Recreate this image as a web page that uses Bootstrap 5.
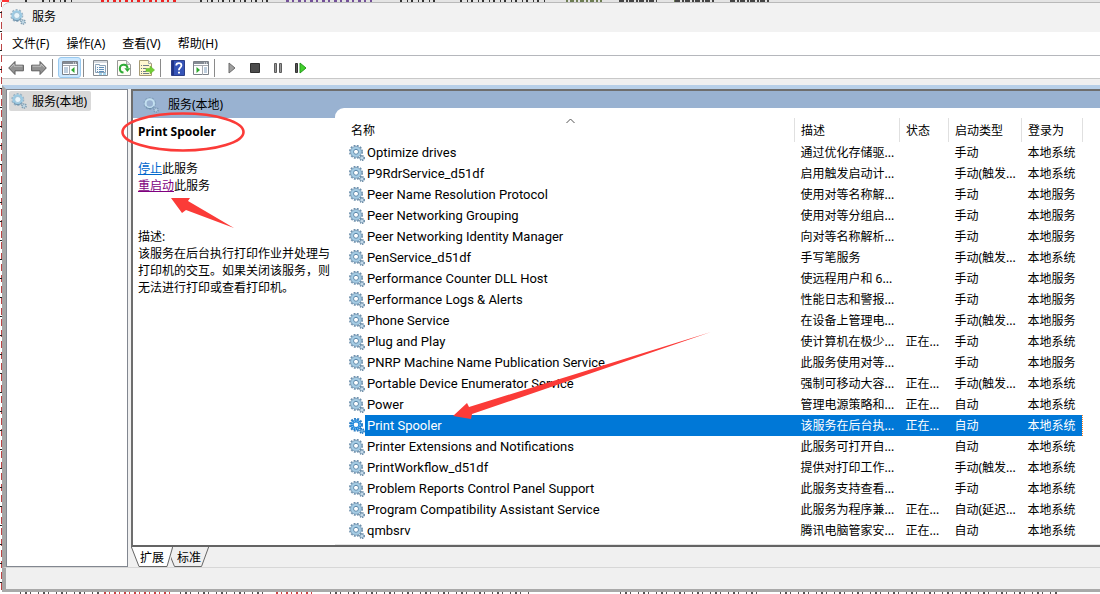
<!DOCTYPE html>
<html lang="zh-CN">
<head>
<meta charset="utf-8">
<meta name="viewport" content="width=device-width, initial-scale=1">
<title>服务</title>
<link href="https://cdn.jsdelivr.net/npm/bootstrap@5.3.0/dist/css/bootstrap.min.css" rel="stylesheet">
<style>
body{font-family:"Noto Sans","Noto Sans CJK SC",sans-serif;font-size:12px;line-height:17px;color:#000;background:#fff;overflow:hidden}
button{font:inherit;color:inherit;background:none;border:0;padding:0}
svg{display:block;flex:none}
.desktop{height:100vh;padding:2px 0 2px 2px}
.edge-left{left:0;top:0;bottom:0;width:2px;background:linear-gradient(90deg,#fff 1px,transparent 1px),repeating-linear-gradient(#b44 0 7px,#fff 7px 11px)}
.edge-left::before{content:"";position:absolute;inset:12px 0 0;background:repeating-linear-gradient(#222 0 1px,transparent 1px 19px)}
.window{background:#f0f0f0;border-top:1px solid #b9b9b9;border-top-left-radius:8px;min-height:0}
.titlebar{flex:none;height:29px;padding:0 0 2px 8px;gap:6px;background:#f2f2f2;border-top-left-radius:8px}
.menubar{flex:none;height:23px;padding-left:10px;gap:17px;background:#fff}
.toolbar{flex:none;height:24px;padding:1px 0 0 2px;background:#fff;border-top:1px solid #b5b7bc;border-bottom:1px solid #c8c8c8}
.tool{width:23px;height:21px;display:flex;align-items:center;justify-content:center;border-radius:3px}
.tool.active{background:#cce8ff;border:1px solid #99c9ef}
.sep{width:1px;height:18px;margin:0 5px 0 2px;background:#8a8a8a}
.workspace{min-height:0;margin-top:6px;background:#f0f0f0;border-top:4px solid #b8d0e9;border-left:4px solid #a6a6a6}
.tree{flex:none;width:122px;border:1px solid #828790;background:#fff;padding:1px 2px}
.tree-item{height:20px;padding:0 4px 0 2px;gap:5px;background:#d9d9d9;border-radius:2px}
.main{margin-left:3px;min-width:0}
.panel{min-height:0;background:#99b2d1;border-top:2px solid #6e6e6e;border-left:2px solid #6e6e6e;border-bottom:2px solid #646464}
.info{width:202px}
.info-head{height:27px;padding-left:10px;gap:9px}
.info-body{background:#fff;padding:5px 4px 0 5px}
.info-body h1{font-size:12px;line-height:17px;font-weight:700}
.info-body a{color:#0066cc}
.info-body a.visited{color:#800080}
.actions{margin-top:20px}
.about{margin-top:34px}
.list{min-width:0;margin-top:17px;background:#fff;border-top-left-radius:9px;padding:10px 17px 0 10px;border-bottom:1px solid #e3e3e3}
.services{table-layout:fixed;width:100%;white-space:nowrap}
.services th{height:24px;padding:0 0 0 6px;font-weight:400;border-right:1px solid #e0e0e0;position:relative}
.services td{height:21px;padding:0 0 0 6px;overflow:hidden}
.services td:first-child{padding:0 0 0 4px}
.caret{left:50%;top:0;margin-left:-4px}
.svc{font-family:Roboto,"Noto Sans",sans-serif;font-size:13px;line-height:21px;padding-left:2px}
.c-desc{width:105px}.c-state{width:49px}.c-type{width:73px}.c-user{width:61px}
.on{color:#fff}
.on .svc,.on td+td{background:#0078d7}
.on td:last-child{border-right:1px dotted #ff8728}
.tabs{height:20px}
.tab{position:relative;height:20px}
.tab svg{position:absolute;left:0;top:0;z-index:0}
.tab span{position:relative;z-index:1}
.tab-a{width:40px;padding-left:2px}.tab-b{width:36px}
.status{height:22px;border-top:1px solid #d7d7d7;border-left:4px solid #a6a6a6;background:#f0f0f0}
.frame-bottom{height:3px;background:#a9a9a9}
.marks{left:0;top:0;z-index:5;pointer-events:none}
</style>
</head>
<body>
<svg width="0" height="0" class="position-absolute" aria-hidden="true">
  <symbol id="gear" viewBox="0 0 16 16">
    <circle cx="7" cy="6.8" r="6.1" fill="none" stroke="#6d8fab" stroke-width="1.8" stroke-dasharray="1.9 1.3"/>
    <circle cx="7" cy="6.8" r="4.1" fill="#fff" stroke="#a5cce4" stroke-width="3"/>
    <circle cx="7" cy="6.8" r="5.4" fill="none" stroke="#7898b3" stroke-width=".7"/>
    <circle cx="7" cy="6.8" r="2.5" fill="#fff" stroke="#5684a8" stroke-width="1"/>
    <circle cx="13" cy="13" r="2.3" fill="#a9c5d9" stroke="#6989a3" stroke-width="1.4" stroke-dasharray="1.2 .8"/>
    <circle cx="13" cy="13" r=".8" fill="#e8f4fb"/>
  </symbol>
  <symbol id="gear-soft" viewBox="0 0 16 16">
    <circle cx="6.8" cy="6.5" r="5.6" fill="none" stroke="#9ab3c5" stroke-width="1.8" stroke-dasharray="2 1.5"/>
    <circle cx="6.8" cy="6.5" r="4.2" fill="#e8f4fa" stroke="#9ccbe4" stroke-width="2.2"/>
    <path d="M2.600 9.500a5.200 5.200 0 0 0 8.400 0" fill="none" stroke="#7394ac" stroke-width="1.1"/>
    <circle cx="6.8" cy="6.500" r="3" fill="none" stroke="#8aafc6" stroke-width=".6"/>
    <circle cx="13" cy="13" r="2.1" fill="#bdd5e3" stroke="#7f9db1" stroke-width="1.5" stroke-dasharray="1.2 .8"/>
  </symbol>
  <symbol id="gear-blue" viewBox="0 0 16 16">
    <circle cx="6.8" cy="6.5" r="5.600" fill="none" stroke="#86a3be" stroke-width="1.600" stroke-dasharray="2 1.500"/>
    <circle cx="6.8" cy="6.5" r="4.200" fill="#99b2d1" stroke="#c3e0f0" stroke-width="2"/>
    <path d="M2.600 9.500a5.200 5.200 0 0 0 8.400 0" fill="none" stroke="#6f8fae" stroke-width="1.100"/>
    <circle cx="13" cy="13" r="2.100" fill="#b5cde0" stroke="#7c99b6" stroke-width="1.500" stroke-dasharray="1.200 .8"/>
  </symbol>
  <symbol id="gear-on" viewBox="0 0 16 16">
    <circle cx="7" cy="6.8" r="6" fill="none" stroke="#2f7fc4" stroke-width="2" stroke-dasharray="1.9 1.3"/>
    <circle cx="7" cy="6.8" r="3.9" fill="#fff" stroke="#1480d8" stroke-width="3.2"/>
    <circle cx="7" cy="6.8" r="4" fill="none" stroke="#7ab9ea" stroke-width="2" stroke-dasharray="1 1"/>
    <circle cx="13" cy="13" r="2.2" fill="#69aee2" stroke="#2176bd" stroke-width="1.4" stroke-dasharray="1.2 .8"/>
  </symbol>
  <symbol id="arrow" viewBox="0 0 16 16">
    <path d="M.7 8 7 1.500v3.700h8.400v5.600H7v3.700z" fill="#929292" stroke="#5c5c5c"/>
    <path d="M2.600 7.600 6 4v2.200h8.400" fill="none" stroke="#c2c2c2"/>
  </symbol>
</svg>

<div class="desktop position-relative d-flex flex-column">
  <div class="edge-left position-absolute"></div>
  <svg class="position-absolute top-0 start-0 w-100" height="3" aria-hidden="true">
    <g stroke-width="2" fill="none">
      <path d="M0 0h1100" stroke="#e4e4e4" stroke-width="4"/>
      <path d="M2 1h7" stroke="#f33"/>
      <path d="M25 1h2M42 1h30M200 1h72M400 1h40M460 1h86" stroke="#333" stroke-dasharray="2 5 1 3"/>
      <path d="M101 1h78" stroke="#e22" stroke-dasharray="3 3 2 4"/>
      <path d="M286 1h86" stroke="#735098" stroke-dasharray="3 3 2 4"/>
      <path d="M566 1h36M674 1h6" stroke="#6d7d52" stroke-dasharray="2 2 4 2"/>
      <path d="M619 1h38M675 1h40M730 1h40" stroke="#444" stroke-dasharray="5 2 2 1"/>
    </g>
  </svg>

  <main class="window position-relative flex-fill d-flex flex-column">
    <header class="titlebar d-flex align-items-center"><svg width="16" height="16"><use href="#gear-soft"/></svg><span>服务</span></header>
    <nav class="menubar d-flex align-items-center">
      <button type="button">文件(F)</button><button type="button">操作(A)</button><button type="button">查看(V)</button><button type="button">帮助(H)</button>
    </nav>
    <div class="toolbar d-flex align-items-center" role="toolbar">
      <button class="tool" type="button" aria-label="后退"><svg width="16" height="16"><use href="#arrow"/></svg></button>
      <button class="tool" type="button" aria-label="前进"><svg width="16" height="16" viewBox="0 0 16 16"><g transform="matrix(-1 0 0 1 16 0)"><use href="#arrow"/></g></svg></button>
      <span class="sep"></span>
      <button class="tool active" type="button" aria-label="控制台树"><svg width="16" height="14" viewBox="0 0 16 14"><path d="M.5.5h15v13H.5z" fill="#fff" stroke="#7b8088"/><path d="M1 1h14v2H1z" fill="#858b94"/><path d="M11 2h1m1 0h1" stroke="#fff"/><path d="M1 4.5h14M7.5 5v9" stroke="#a5a9b0"/><path d="M2 7h4M2 9h4M2 11h4" stroke="#7d9cbc"/><path d="M12.5 6v6L9 9z" fill="#2ea82e"/></svg></button>
      <span class="sep"></span>
      <button class="tool" type="button" aria-label="属性"><svg width="15" height="16" viewBox="0 0 15 16"><path d="M.5.5h14v15H.5z" fill="#fff" stroke="#858a90"/><path d="M1 2h13" stroke="#d5dae0" stroke-width="2"/><path d="M2.500 5.500V4.500h4v1h6v7h-10z" fill="#f6f9fc" stroke="#8ba3b8"/><path d="M4 7.500h1m1 0h5M4 9.500h1m1 0h5M4 11.500h1m1 0h5" stroke="#5f8eb8"/><path d="M6 14h3m1 0h3" stroke="#4aabdf"/></svg></button>
      <button class="tool" type="button" aria-label="刷新"><svg width="14" height="16" viewBox="0 0 14 16"><path d="M.5.5h9l4 4v11H.5z" fill="#fffef6" stroke="#999"/><path d="M9.500.5v4h4" fill="#ddd" stroke="#aaa"/><path d="M6.500 12.600A3.900 3.900 0 1 1 10.600 8" fill="none" stroke="#2eab36" stroke-width="2"/><path d="M7.400 8.200h6L10.400 12z" fill="#2eab36"/></svg></button>
      <button class="tool" type="button" aria-label="导出列表"><svg width="16" height="16" viewBox="0 0 16 16"><path d="M.5.5h9l3 3v12H.5z" fill="#fff7cf" stroke="#a79b73"/><path d="M9.500.5v3h3" fill="#eee" stroke="#aaa"/><path d="M2 5.500h1m1 0h6M2 8.500h1m1 0h3M2 11.500h1m1 0h3M2 13.500h1m1 0h6" stroke="#6f7c88"/><path d="M7 8.500h4V6l4.600 4-4.600 4v-2.500H7z" fill="#72cf34" stroke="#5caf2a" stroke-width=".5"/></svg></button>
      <span class="sep"></span>
      <button class="tool" type="button" aria-label="帮助"><svg width="14" height="16" viewBox="0 0 14 16"><path d="M.5.5h13v15H.5z" fill="#3554b7" stroke="#2d3f88"/><path d="M1 1h2v14H1z" fill="#1f3488"/><path d="M5.200 5.600c0-3.300 5.200-3.200 5.200-.1 0 2.100-2.500 2.100-2.500 4.700M7 12.700h2" fill="none" stroke="#fff" stroke-width="1.800"/></svg></button>
      <button class="tool" type="button" aria-label="操作窗格"><svg width="16" height="14" viewBox="0 0 16 14"><path d="M.5.5h15v13H.5z" fill="#fff" stroke="#7b8088"/><path d="M1 1h14v2H1z" fill="#858b94"/><path d="M11 2h1m1 0h1" stroke="#fff"/><path d="M1 4.500h14M9.500 5v9" stroke="#a5a9b0"/><path d="M11 7h3m-3 2h3m-3 2h3" stroke="#7d9cbc"/><path d="M3.500 6v6L7 9z" fill="#2ea82e"/></svg></button>
      <span class="sep"></span>
      <button class="tool" type="button" aria-label="启动"><svg width="8" height="12" viewBox="0 0 8 12"><path d="M1 1v10l6-5z" fill="#a0a0a0" stroke="#6c6c6c"/></svg></button>
      <button class="tool" type="button" aria-label="停止"><svg width="10" height="10" viewBox="0 0 10 10"><path d="M.5.5h9v9h-9z" fill="#4c4c4c" stroke="#303030"/></svg></button>
      <button class="tool" type="button" aria-label="暂停"><svg width="8" height="10" viewBox="0 0 8 10"><path d="M.5.5h2v9h-2zM5.500.5h2v9h-2z" fill="#999" stroke="#5c5c5c"/></svg></button>
      <button class="tool" type="button" aria-label="重新启动"><svg width="12" height="12" viewBox="0 0 12 12"><path d="M.5 1.500h2v9h-2z" fill="#555" stroke="#333"/><path d="M5 1v10l6-5z" fill="#43d02c" stroke="#249a1b"/></svg></button>
    </div>

    <div class="workspace flex-fill d-flex">
      <aside class="tree">
        <button class="tree-item d-inline-flex align-items-center" type="button"><svg width="16" height="16"><use href="#gear-soft"/></svg><span>服务(本地)</span></button>
      </aside>
      <section class="main flex-fill d-flex flex-column">
        <div class="panel flex-fill d-flex">
          <div class="info d-flex flex-column flex-shrink-0">
            <div class="info-head d-flex align-items-center"><svg width="16" height="16"><use href="#gear-blue"/></svg><span>服务(本地)</span></div>
            <div class="info-body flex-fill">
              <h1 class="mb-0">Print Spooler</h1>
              <div class="actions"><a href="#">停止</a>此服务<br><a class="visited" href="#">重启动</a>此服务</div>
              <p class="about mb-0">描述:<br>该服务在后台执行打印作业并处理与打印机的交互。如果关闭该服务，则无法进行打印或查看打印机。</p>
            </div>
          </div>
          <div class="list flex-fill overflow-hidden">
            <table class="services">
              <thead><tr>
                <th>名称<svg class="caret position-absolute" width="9" height="6" viewBox="0 0 9 6"><path d="M.5 5 4.500 1l4 4" fill="none" stroke="#555"/></svg></th>
                <th class="c-desc">描述</th><th class="c-state">状态</th><th class="c-type">启动类型</th><th class="c-user">登录为</th>
              </tr></thead>
              <tbody id="rows"></tbody>
            </table>
          </div>
        </div>
        <div class="tabs d-flex flex-shrink-0">
          <button class="tab tab-a" type="button"><svg width="42" height="20" viewBox="0 0 42 20"><path d="M0-3 8 19.500h28L41-3z" fill="#fff"/><path d="M0-1 8 19.500h28L42-1" fill="none" stroke="#666"/></svg><span>扩展</span></button>
          <button class="tab tab-b" type="button"><svg width="38" height="20" viewBox="0 0 38 20"><path d="M-1 8.500 3.500 19.500h27L38-1" fill="none" stroke="#666"/></svg><span>标准</span></button>
        </div>
      </section>
    </div>
    <footer class="status flex-shrink-0"></footer>
    <div class="frame-bottom flex-shrink-0"></div>
  </main>
  <svg class="position-absolute bottom-0 start-0 w-100" height="2" aria-hidden="true"><path d="M20 1h80M180 1h90M330 1h200M620 1h140M780 1h280" stroke="#555" stroke-width="2" stroke-dasharray="1 4 2 3 1 7"/><path d="M104 1h70M276 1h40" stroke="#c44" stroke-width="2" stroke-dasharray="2 3 1 4"/></svg>

  <svg class="marks position-absolute" width="720" height="430" viewBox="0 0 720 430" aria-hidden="true">
    <ellipse cx="183" cy="132" rx="60.500" ry="18.500" fill="none" stroke="#fb3b38" stroke-width="2.600"/>
    <path d="M171 198h19l-2 3 46 27-48-18-4 3z" fill="#fb3b38"/>
    <path d="M453 416 467 403l2 4 242-75-239 82-1 5z" fill="#fb3b38"/>
  </svg>
</div>

<script>
const rows = [
  ["Optimize drives","通过优化存储驱...","","手动","本地系统"],
  ["P9RdrService_d51df","启用触发启动计...","","手动(触发...","本地系统"],
  ["Peer Name Resolution Protocol","使用对等名称解...","","手动","本地服务"],
  ["Peer Networking Grouping","使用对等分组启...","","手动","本地服务"],
  ["Peer Networking Identity Manager","向对等名称解析...","","手动","本地服务"],
  ["PenService_d51df","手写笔服务","","手动(触发...","本地系统"],
  ["Performance Counter DLL Host","使远程用户和 6...","","手动","本地服务"],
  ["Performance Logs & Alerts","性能日志和警报...","","手动","本地服务"],
  ["Phone Service","在设备上管理电...","","手动(触发...","本地服务"],
  ["Plug and Play","使计算机在极少...","正在...","手动","本地系统"],
  ["PNRP Machine Name Publication Service","此服务使用对等...","","手动","本地服务"],
  ["Portable Device Enumerator Service","强制可移动大容...","正在...","手动(触发...","本地系统"],
  ["Power","管理电源策略和...","正在...","自动","本地系统"],
  ["Print Spooler","该服务在后台执...","正在...","自动","本地系统"],
  ["Printer Extensions and Notifications","此服务可打开自...","","自动","本地系统"],
  ["PrintWorkflow_d51df","提供对打印工作...","","手动(触发...","本地系统"],
  ["Problem Reports Control Panel Support","此服务支持查看...","","手动","本地系统"],
  ["Program Compatibility Assistant Service","此服务为程序兼...","正在...","自动(延迟...","本地系统"],
  ["qmbsrv","腾讯电脑管家安...","正在...","自动","本地系统"],
  ["","","","",""]
];
const body = document.getElementById("rows");
for (const [name, ...rest] of rows) {
  const on = name === "Print Spooler";
  const tr = body.insertRow();
  if (on) tr.className = "on";
  tr.insertCell().innerHTML = `<div class="d-flex align-items-center"><svg width="16" height="16"><use href="#gear${on ? "-on" : ""}"/></svg><span class="svc flex-fill"></span></div>`;
  tr.querySelector(".svc").textContent = name;
  for (const t of rest) tr.insertCell().textContent = t;
}
</script>
<script src="https://cdn.jsdelivr.net/npm/bootstrap@5.3.0/dist/js/bootstrap.bundle.min.js"></script>
</body>
</html>
